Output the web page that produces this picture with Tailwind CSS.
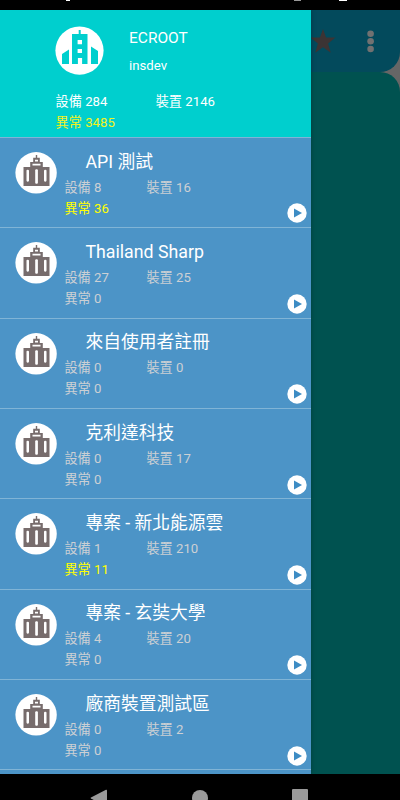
<!DOCTYPE html>
<html lang="zh-Hant">
<head>
<meta charset="utf-8">
<meta name="viewport" content="width=device-width, initial-scale=1">
<title>ECROOT</title>
<script src="https://cdn.jsdelivr.net/npm/@tailwindcss/browser@4"></script>
</head>
<body class="bg-black font-[Roboto,'Noto_Sans_CJK_TC',sans-serif]">
<svg class="hidden">
  <symbol id="building" viewBox="0 0 42 42">
    <circle cx="21.1" cy="20.8" r="20.7" fill="#fff"/>
    <path fill="#776c6c" d="M20.8 3h1.4v2.8h2.6v4.2h3v5h6.7v19H8.5V15h6.7v-5h3V5.8h2.6z"/>
    <path fill="#fff" d="M20 7.7h3v1.8h-3zM17.5 11.7h8v1.9h-8z"/>
    <g fill="#fff"><rect x="11.5" y="17.7" width="2.5" height="12" rx="1.1"/><rect x="20.2" y="17.2" width="2.7" height="14.6" rx="1.1"/><rect x="29" y="17.7" width="2.5" height="12" rx="1.1"/></g>
  </symbol>
  <symbol id="play" viewBox="0 0 20 20">
    <circle cx="10" cy="10" r="9.7" fill="#fff"/><path d="M7 5.6v8.8l8-4.4z" fill="#3d8cc4"/>
  </symbol>
</svg>
<div class="flex h-[800px] w-[400px] flex-col overflow-hidden bg-black">
  <div class="flex h-[10px] shrink-0 items-start">
    <i class="ml-[66px] h-px w-1 bg-white"></i>
    <i class="ml-[224px] h-px w-[7px] bg-[#999]"></i>
    <i class="ml-[38px] h-px w-2 bg-white"></i>
  </div>
  <main class="relative h-[763.5px] shrink-0 overflow-hidden bg-[#666]">
    <div class="flex h-full flex-col">
      <header class="flex h-[62px] shrink-0 items-center justify-end rounded-br-[20px] bg-[#034a5c] pr-[21px]">
        <svg class="mr-[27px] h-6 w-[26px]" viewBox="0 0 26 24"><path fill="#3c3434" d="M13 0l3.1 8.4 9.4.2-7.4 5.8 2.7 9.3-7.8-5.4-7.8 5.4 2.7-9.3L.5 8.6l9.4-.2z"/></svg>
        <svg class="h-6 w-4" viewBox="0 0 16 24" fill="#717171"><circle cx="7.6" cy="4.7" r="3.3"/><circle cx="7.6" cy="12.3" r="3.3"/><circle cx="7.6" cy="20" r="3.3"/></svg>
      </header>
      <section class="flex-1 rounded-tr-[20px] bg-[#005250]"></section>
    </div>
    <aside class="absolute inset-y-0 left-0 w-[311px] overflow-hidden bg-[#4c94c7] text-[13.2px] leading-[21px] text-white shadow-[0_0_5px_rgba(0,0,0,0.25)]">
      <div class="h-[127.8px] border-b border-[#80b4d6] bg-[#00cfce] pl-[55px] pt-[16px]">
        <div class="flex h-[65px]">
          <svg class="size-[49px]" viewBox="0 0 49 49"><circle cx="24.5" cy="24.6" r="24.1" fill="#fff"/>
            <path fill="#00cfce" d="M23.7 4h2v4h6.8v30h-5.4v-6h-4.2v6H17V8h6.7zM7 28l7-4.5V38H7zM36 20.5l7 4.5v13h-7z"/>
            <path fill="#fff" d="M22.6 14h4.4v4.2h-4.4zM22.6 23h4.4v4h-4.4z"/></svg>
          <div class="ml-[25px]">
            <div class="text-[15.5px] leading-[24px]">ECROOT</div>
            <div class="mt-[5px] text-[13.2px] leading-[22px]">insdev</div>
          </div>
        </div>
        <div class="flex pl-[0.5px]"><span class="w-[100.2px]">設備 284</span><span>裝置 2146</span></div>
        <div class="pl-[0.5px] text-[#f2f21e]">異常 3485</div>
      </div>
      <div id="list"></div>
    </aside>
  </main>
  <nav class="flex flex-1 items-start overflow-hidden pt-[15px]">
    <svg class="ml-[90px] h-[18px] w-[17px] shrink-0" viewBox="0 0 17 18"><path d="M16 .8c.6-.3 1 0 1 .5v15.4c0 .5-.4.8-1 .5L1 9.6c-.6-.4-.6-.8 0-1.2z" fill="#9a9a9a"/></svg>
    <i class="ml-[85px] mt-px size-4 shrink-0 rounded-full bg-[#9a9a9a]"></i>
    <i class="ml-[83.5px] mt-[0.5px] size-[16.5px] shrink-0 rounded-[1px] bg-[#9a9a9a]"></i>
  </nav>
</div>
<script>
const sites = [
  ['API 測試', 8, 16, 36],
  ['Thailand Sharp', 27, 25, 0],
  ['來自使用者註冊', 0, 0, 0],
  ['克利達科技', 0, 17, 0],
  ['專案 - 新北能源雲', 1, 210, 11],
  ['專案 - 玄奘大學', 4, 20, 0],
  ['廠商裝置測試區', 0, 2, 0],
];
document.getElementById('list').innerHTML = sites.map(([name, equipment, devices, faults]) => `
  <div class="flex h-[90.36px] border-b border-[#80b4d6] pl-[15px] pr-[4px] text-[#ccd0d4]">
    <svg class="mt-[14px] size-[42px] shrink-0"><use href="#building"/></svg>
    <div class="ml-[7.4px] flex-1 pt-[9.9px]">
      <div class="pl-[21px] text-[17.75px] leading-[29px] text-white">${name}</div>
      <div class="flex"><span class="w-[82px]">設備 ${equipment}</span><span>裝置 ${devices}</span></div>
      <div class="${faults ? 'text-[#ff0]' : 'text-[#ccd0d4]'}">異常 ${faults}</div>
    </div>
    <svg class="mb-[3.7px] size-5 shrink-0 self-end"><use href="#play"/></svg>
  </div>`).join('');
</script>
</body>
</html>
